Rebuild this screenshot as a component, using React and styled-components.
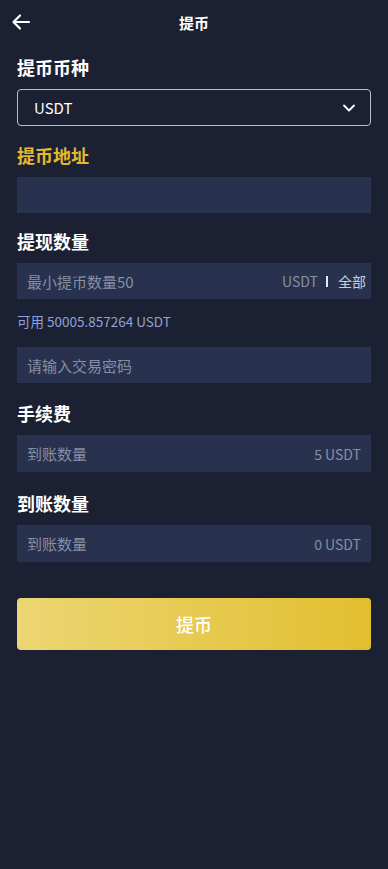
import React from 'react';
import styled, {createGlobalStyle} from 'styled-components';

const Global = createGlobalStyle`
  html, body { margin: 0; padding: 0; background: #1b2132; }
  body { font-family: "Noto Sans CJK SC", "Noto Sans", sans-serif; }
  #root { min-height: 869px; background: #1b2132; }
`;

const Page = styled.div`
  width: 388px;
  min-height: 869px;
  background: #1b2132;
  color: #fff;
  box-sizing: border-box;
`;

const Header = styled.div`
  height: 44px;
  display: flex;
  align-items: center;
  justify-content: center;
  position: relative;
`;

const Back = styled.div`
  position: absolute;
  left: 11px;
  top: 12px;
  width: 20px;
  height: 20px;
  display: flex;
`;

const Title = styled.div`
  font-size: 15px;
  font-weight: 700;
`;

const Form = styled.div`
  padding: 11px 17px 0 17px;
  display: flex;
  flex-direction: column;
`;

const Label = styled.div`
  font-size: 18px;
  font-weight: 700;
  line-height: 24px;
  height: 24px;
  color: ${p => (p.$accent ? '#e3b82e' : '#ffffff')};
  margin-bottom: 10px;
`;

const Select = styled.div`
  box-sizing: border-box;
  height: 37px;
  border: 1px solid #b9bec8;
  border-radius: 4px;
  display: flex;
  align-items: center;
  justify-content: space-between;
  padding: 0 14px 0 16px;
  font-size: 15px;
  margin-bottom: 17px;
`;

const Field = styled.div`
  height: ${p => p.$h ?? 36}px;
  background: #28324f;
  display: flex;
  align-items: center;
  justify-content: space-between;
  padding: 0 ${p => p.$pr ?? 10}px 0 10px;
  font-size: 15px;
  color: #878fa3;
  margin-bottom: ${p => p.$mb ?? 16}px;
`;

const Right = styled.div`
  display: flex;
  align-items: center;
  font-size: 14px;
  color: #878fa3;
`;

const Bar = styled.span`
  display: inline-block;
  width: 2px;
  height: 11px;
  background: #d6ecff;
  margin: 0 10px 0 8px;
`;

const All = styled.span`
  color: #c9cfdb;
`;

const Avail = styled.div`
  font-size: 13.5px;
  color: #8fa0dc;
  margin-bottom: 18px;
  line-height: 16px;
  height: 16px;
`;

const Submit = styled.button`
  margin-top: 36px;
  height: 52px;
  border: none;
  border-radius: 4px;
  background: linear-gradient(90deg, #ecd673 0%, #e2be2f 100%);
  color: #fff;
  font-family: inherit;
  font-size: 18px;
  font-weight: 500;
`;

export default function App() {
  return (
    <Page>
      <Global />
      <Header>
        <Back>
          <svg width="20" height="20" viewBox="0 0 20 20" fill="none" stroke="#fff" strokeWidth="2.2" strokeLinecap="round" strokeLinejoin="round">
            <path d="M18 10H3M9 3.5L2.5 10 9 16.5" />
          </svg>
        </Back>
        <Title>提币</Title>
      </Header>
      <Form>
        <Label>提币币种</Label>
        <Select>
          <span>USDT</span>
          <svg width="14" height="14" viewBox="0 0 14 14" fill="none" stroke="#fff" strokeWidth="1.8" strokeLinecap="round" strokeLinejoin="round">
            <path d="M2 4.5l5 5 5-5" />
          </svg>
        </Select>
        <Label $accent>提币地址</Label>
        <Field />
        <Label>提现数量</Label>
        <Field $pr={5} $mb={14}>
          <span>最小提币数量50</span>
          <Right>
            USDT<Bar /><All>全部</All>
          </Right>
        </Field>
        <Avail>可用 50005.857264 USDT</Avail>
        <Field $mb={18}>
          <span>请输入交易密码</span>
        </Field>
        <Label>手续费</Label>
        <Field $h={37} $mb={19}>
          <span>到账数量</span>
          <Right>5 USDT</Right>
        </Field>
        <Label>到账数量</Label>
        <Field $h={37} $mb={0}>
          <span>到账数量</span>
          <Right>0 USDT</Right>
        </Field>
        <Submit>提币</Submit>
      </Form>
    </Page>
  );
}
